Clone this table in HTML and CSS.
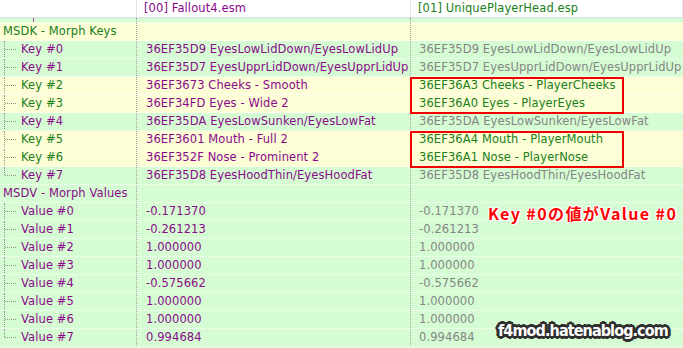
FILE: index.html
```html
<!DOCTYPE html>
<html>
<head>
<meta charset="utf-8">
<link rel="stylesheet" href="styles.css">
</head>
<body>
<div class="view">
  <div class="hdr">
    <div class="hc"></div>
    <div class="hc purple">[00] Fallout4.esm</div>
    <div class="hc green">[01] UniquePlayerHead.esp</div>
  </div>
  <div class="row g partial"><div class="c1"><span class="tick"></span></div><div class="c2"></div><div class="c3"></div></div>

  <div class="row y"><div class="c1 top green">MSDK - Morph Keys</div><div class="c2"></div><div class="c3"></div></div>
  <div class="row g"><div class="c1 child purple">Key #0</div><div class="c2 purple">36EF35D9 EyesLowLidDown/EyesLowLidUp</div><div class="c3 gray">36EF35D9 EyesLowLidDown/EyesLowLidUp</div></div>
  <div class="row g"><div class="c1 child purple">Key #1</div><div class="c2 purple">36EF35D7 EyesUpprLidDown/EyesUpprLidUp</div><div class="c3 gray">36EF35D7 EyesUpprLidDown/EyesUpprLidUp</div></div>
  <div class="row y"><div class="c1 child green">Key #2</div><div class="c2 purple">36EF3673 Cheeks - Smooth</div><div class="c3 green">36EF36A3 Cheeks - PlayerCheeks</div></div>
  <div class="row y"><div class="c1 child green">Key #3</div><div class="c2 purple">36EF34FD Eyes - Wide 2</div><div class="c3 green">36EF36A0 Eyes - PlayerEyes</div></div>
  <div class="row g"><div class="c1 child purple">Key #4</div><div class="c2 purple">36EF35DA EyesLowSunken/EyesLowFat</div><div class="c3 gray">36EF35DA EyesLowSunken/EyesLowFat</div></div>
  <div class="row y"><div class="c1 child green">Key #5</div><div class="c2 purple">36EF3601 Mouth - Full 2</div><div class="c3 green">36EF36A4 Mouth - PlayerMouth</div></div>
  <div class="row y"><div class="c1 child green">Key #6</div><div class="c2 purple">36EF352F Nose - Prominent 2</div><div class="c3 green">36EF36A1 Nose - PlayerNose</div></div>
  <div class="row g"><div class="c1 child last purple">Key #7</div><div class="c2 purple">36EF35D8 EyesHoodThin/EyesHoodFat</div><div class="c3 gray">36EF35D8 EyesHoodThin/EyesHoodFat</div></div>

  <div class="row g"><div class="c1 top purple">MSDV - Morph Values</div><div class="c2"></div><div class="c3"></div></div>
  <div class="row g"><div class="c1 child purple">Value #0</div><div class="c2 purple">-0.171370</div><div class="c3 gray">-0.171370</div></div>
  <div class="row g"><div class="c1 child purple">Value #1</div><div class="c2 purple">-0.261213</div><div class="c3 gray">-0.261213</div></div>
  <div class="row g"><div class="c1 child purple">Value #2</div><div class="c2 purple">1.000000</div><div class="c3 gray">1.000000</div></div>
  <div class="row g"><div class="c1 child purple">Value #3</div><div class="c2 purple">1.000000</div><div class="c3 gray">1.000000</div></div>
  <div class="row g"><div class="c1 child purple">Value #4</div><div class="c2 purple">-0.575662</div><div class="c3 gray">-0.575662</div></div>
  <div class="row g"><div class="c1 child purple">Value #5</div><div class="c2 purple">1.000000</div><div class="c3 gray">1.000000</div></div>
  <div class="row g"><div class="c1 child purple">Value #6</div><div class="c2 purple">1.000000</div><div class="c3 gray">1.000000</div></div>
  <div class="row g"><div class="c1 child last purple">Value #7</div><div class="c2 purple">0.994684</div><div class="c3 gray">0.994684</div></div>

  <div class="box box1"></div>
  <div class="box box2"></div>
  <div class="note">Key #0の値がValue #0</div>
  <div class="mark">f4mod.hatenablog.com</div>
</div>
</body>
</html>
```
FILE: styles.css
```css
html, body {
  margin: 0;
  padding: 0;
  background: #d5fcd3;
}
.view {
  position: relative;
  width: 683px;
  height: 348px;
  overflow: hidden;
  font-family: "DejaVu Sans", Verdana, sans-serif;
  font-size: 11.5px;
  letter-spacing: 0.1px;
  background: #d5fcd3;
}
.hdr {
  display: grid;
  grid-template-columns: 137px 274px 1fr;
  height: 17px;
  background: #ffffff;
  border-bottom: 1px solid #dcdcdc;
}
.hc {
  line-height: 17px;
  padding-left: 7px;
  border-right: 1px solid #e2e2e2;
  white-space: nowrap;
}
.row {
  display: grid;
  grid-template-columns: 137px 274px 1fr;
  height: 17px;
  border-bottom: 1px dotted #ffffff;
}
.row.partial { height: 4px; }
.row.g { background: #d5fcd3; }
.row.y { background: #fdfdd6; }
.c1, .c2, .c3 {
  position: relative;
  line-height: 17px;
  white-space: nowrap;
  overflow: hidden;
}
.c1, .c2 { border-right: 1px dotted #a0a0a0; }
.c1.top { padding-left: 3px; }
.c1.child { padding-left: 21px; }
.c2 { padding-left: 9px; }
.c3 { padding-left: 8px; }
.c1.child::before {
  content: "";
  position: absolute;
  left: 4px;
  top: 0;
  bottom: -1px;
  border-left: 1px dotted #909090;
}
.c1.child.last::before { bottom: 9px; }
.c1.child::after {
  content: "";
  position: absolute;
  left: 5px;
  top: 8px;
  width: 11px;
  border-top: 1px dotted #909090;
}
.tick {
  position: absolute;
  left: 33px;
  top: 0;
  height: 4px;
  border-left: 1px solid #a050a0;
}
.purple { color: #8a0a8a; }
.green { color: #1a801a; }
.gray { color: #858585; }
.box {
  position: absolute;
  left: 410px;
  width: 210px;
  height: 33px;
  border: 2px solid #f00000;
}
.box1 { top: 77px; }
.box2 { top: 131px; }
.note {
  position: absolute;
  left: 488px;
  top: 201px;
  font-family: "Noto Sans CJK JP", sans-serif;
  font-weight: 700;
  font-size: 16px;
  line-height: 24px;
  color: #ff0000;
  letter-spacing: 1.4px;
  text-shadow: 1px 0 #fff, -1px 0 #fff, 0 1px #fff, 0 -1px #fff, 1px 1px #fff, -1px -1px #fff, 1px -1px #fff, -1px 1px #fff;
}
.mark {
  position: absolute;
  left: 498px;
  top: 319px;
  font-family: "DejaVu Sans Condensed", "DejaVu Sans", sans-serif;
  font-stretch: condensed;
  font-weight: 700;
  font-size: 16px;
  letter-spacing: -0.9px;
  line-height: 24px;
  color: #ffffff;
  text-shadow: 2px 0 #2e2e2e, -2px 0 #2e2e2e, 0 2px #2e2e2e, 0 -2px #2e2e2e, 2px 2px #2e2e2e, -2px -2px #2e2e2e, 2px -2px #2e2e2e, -2px 2px #2e2e2e, 3px 0 #2e2e2e, -3px 0 #2e2e2e, 0 3px #2e2e2e, 0 -3px #2e2e2e;
}
```
